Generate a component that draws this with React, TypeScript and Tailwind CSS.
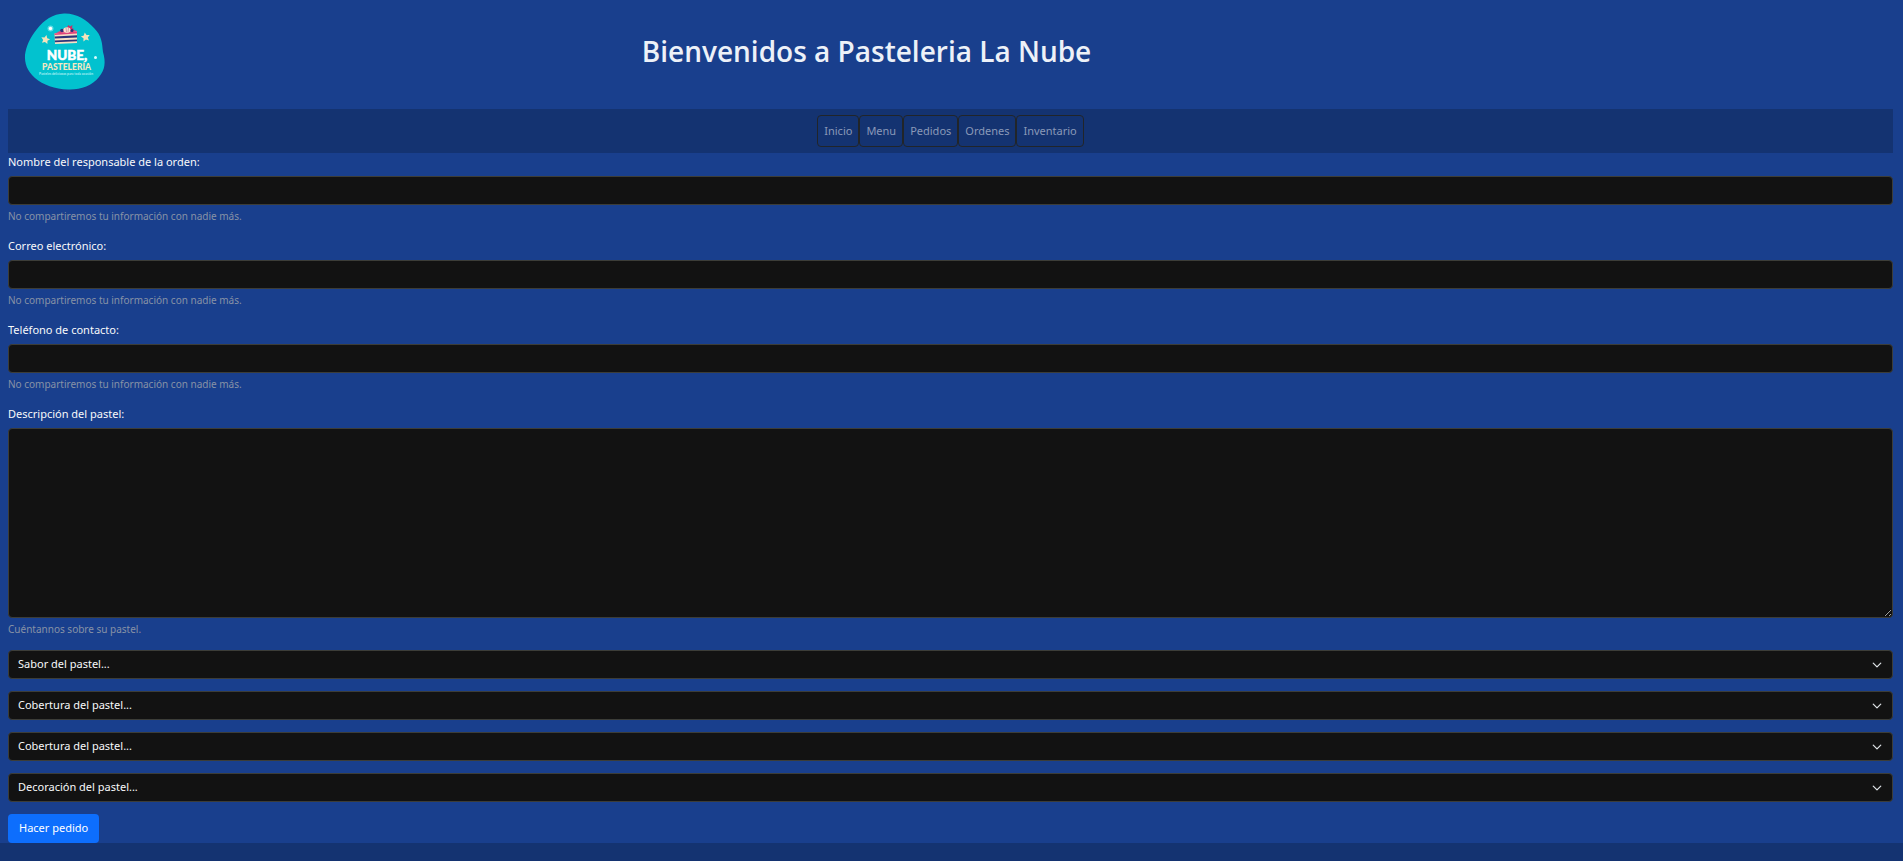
import React from "react";

const navItems = ["Inicio", "Menu", "Pedidos", "Ordenes", "Inventario"];

const textFields = [
  { id: "nombre", label: "Nombre del responsable de la orden:", type: "text" },
  { id: "correo", label: "Correo electrónico:", type: "email" },
  { id: "telefono", label: "Teléfono de contacto:", type: "tel" },
];

const selectFields = [
  { id: "sabor", text: "Sabor del pastel..." },
  { id: "cobertura-1", text: "Cobertura del pastel..." },
  { id: "cobertura-2", text: "Cobertura del pastel..." },
  { id: "decoracion", text: "Decoración del pastel..." },
];

const star = "M0 -4.6 L1.4 -1.7 L4.5 -1.3 L2.2 0.9 L2.8 4 L0 2.5 L-2.8 4 L-2.2 0.9 L-4.5 -1.3 L-1.4 -1.7 Z";

function Logo() {
  return (
    <svg viewBox="0 0 120 94" className="h-[94px] w-[120px] shrink-0" role="img" aria-label="Nube, Pastelería">
      <path
        d="M64 13.500 C76 13 87 20 94 28 C102 36 102 43 103 52 C106 62 105 70 99 77 C92 86 80 90 68 89.500 C55 89 43 85 35 78 C27 71 24.500 63 25 55 C26 46 30 38 37 29 C44 20 53 14 64 13.500 Z"
        fill="#02c2cf"
      />
      <circle cx="50.500" cy="28.500" r="3" fill="#9beef2" opacity="0.6" />
      <circle cx="50.500" cy="28.500" r="1.700" fill="#fff" />
      <circle cx="95.500" cy="57.500" r="1.500" fill="#d8fbfc" />
      <path d={star} transform="translate(45.500 39.500) rotate(12)" fill="#f5e3bb" />
      <path d={star} transform="translate(85.500 37) rotate(-10)" fill="#f5e3bb" />
      <g transform="translate(8 0)">
        <path d="M46.500 34 L58 27.500 L69 31 L69 34 Z" fill="#e0447c" />
        <path d="M46.500 33.500 L69 31.500 L69 43 L47 44 Z" fill="#f8dfc5" />
        <path d="M46.500 33.400 L69 31.600 L69 33.400 L46.500 35 Z" fill="#e0447c" />
        <path d="M46.700 36.500 L69 35.300 L69 37.500 L46.800 38.500 Z" fill="#2c3479" />
        <path d="M46.800 40.600 L69 39.600 L69 41.300 L46.900 42.300 Z" fill="#2c3479" />
        <circle cx="54" cy="30.500" r="1.800" fill="#2c3479" />
        <path d="M58.500 28 L60.500 25 L62 26.500 L64.500 25 L64 28 L66 29 L63 31 Z" fill="#c93165" />
        <ellipse cx="59" cy="30" rx="3.600" ry="2.700" fill="#fbe6d3" />
        <path d="M58 27.500 L58.500 32 M60.500 27.500 L60 32" stroke="#b34b78" strokeWidth="0.5" />
        <circle cx="64" cy="30.500" r="1.500" fill="#2c3479" />
      </g>
      <text x="67" y="59.500" textAnchor="middle" fontFamily="Lato, sans-serif" fontWeight="900" fontSize="13.500" fill="#fff" stroke="#fff" strokeWidth="0.5">NUBE,</text>
      <text x="66.500" y="69.500" textAnchor="middle" fontFamily="Lato, sans-serif" fontWeight="900" fontSize="8.500" fill="#f6e7c1">PASTELERÍA</text>
      <text x="66" y="74.500" textAnchor="middle" fontFamily="Lato, sans-serif" fontWeight="700" fontSize="3.300" fill="#a8eff3">Pasteles deliciosos para toda ocasión</text>
    </svg>
  );
}

function Chevron() {
  return (
    <svg viewBox="0 0 16 16" className="pointer-events-none absolute top-1/2 right-[11px] h-2.5 w-2.5 -translate-y-1/2" aria-hidden="true">
      <path fill="none" stroke="#dee2e6" strokeLinecap="round" strokeLinejoin="round" strokeWidth="2" d="m2 5 6 6 6-6" />
    </svg>
  );
}

const control = "block w-full rounded border border-[#3c3d38] bg-[#121212] px-[9px] text-[11px] text-[#f8f9fa]";
const label = "mb-[5px] block leading-[18px]";
const help = "mt-[3px] text-[10px] leading-4 text-[#8792a6]";

export default function App() {
  return (
    <div className="flex min-h-screen flex-col bg-[#193f8d] font-['Noto_Sans',sans-serif] text-[11px] text-[#f8f9fa]">
      <div className="pr-2.5 pl-2">
        <header className="flex h-[109px] items-start pr-72">
          <div className="-ml-2">
            <Logo />
          </div>
          <h1 className="flex-1 pt-[33px] pl-2 text-center font-['Open_Sans',sans-serif] text-[28px] leading-9 font-semibold text-[#edf1f8]">
            Bienvenidos a Pasteleria La Nube
          </h1>
        </header>
        <nav className="flex h-11 items-center justify-center bg-[#143371]">
          {navItems.map((item) => (
            <a
              key={item}
              href="#"
              className="flex h-8 items-center rounded border border-[#212529] px-1.5 text-[#8a99b8]"
            >
              {item}
            </a>
          ))}
        </nav>
        <form onSubmit={(e) => e.preventDefault()}>
          {textFields.map((f) => (
            <div key={f.id} className="mb-[13px]">
              <label htmlFor={f.id} className={label}>{f.label}</label>
              <input id={f.id} type={f.type} aria-describedby={f.id + "-help"} className={control + " h-[29px]"} />
              <p id={f.id + "-help"} className={help}>
                No compartiremos tu información con nadie más.
              </p>
            </div>
          ))}
          <div className="mb-[13px]">
            <label htmlFor="descripcion" className={label}>Descripción del pastel:</label>
            <textarea id="descripcion" aria-describedby="descripcion-help" className={control + " h-[190px] resize-y"} />
            <p id="descripcion-help" className={help}>
              Cuéntannos sobre su pastel.
            </p>
          </div>
          {selectFields.map((s) => (
            <div key={s.id} className="relative mb-3">
              <select id={s.id} aria-label={s.text} className={control + " h-[29px] appearance-none"}>
                <option>{s.text}</option>
              </select>
              <Chevron />
            </div>
          ))}
          <button type="submit" className="block h-[29px] rounded bg-[#0d6efd] px-[11px] text-[11px] text-white">
            Hacer pedido
          </button>
        </form>
      </div>
      <footer className="min-h-4 flex-1 bg-[#143371]" />
    </div>
  );
}
